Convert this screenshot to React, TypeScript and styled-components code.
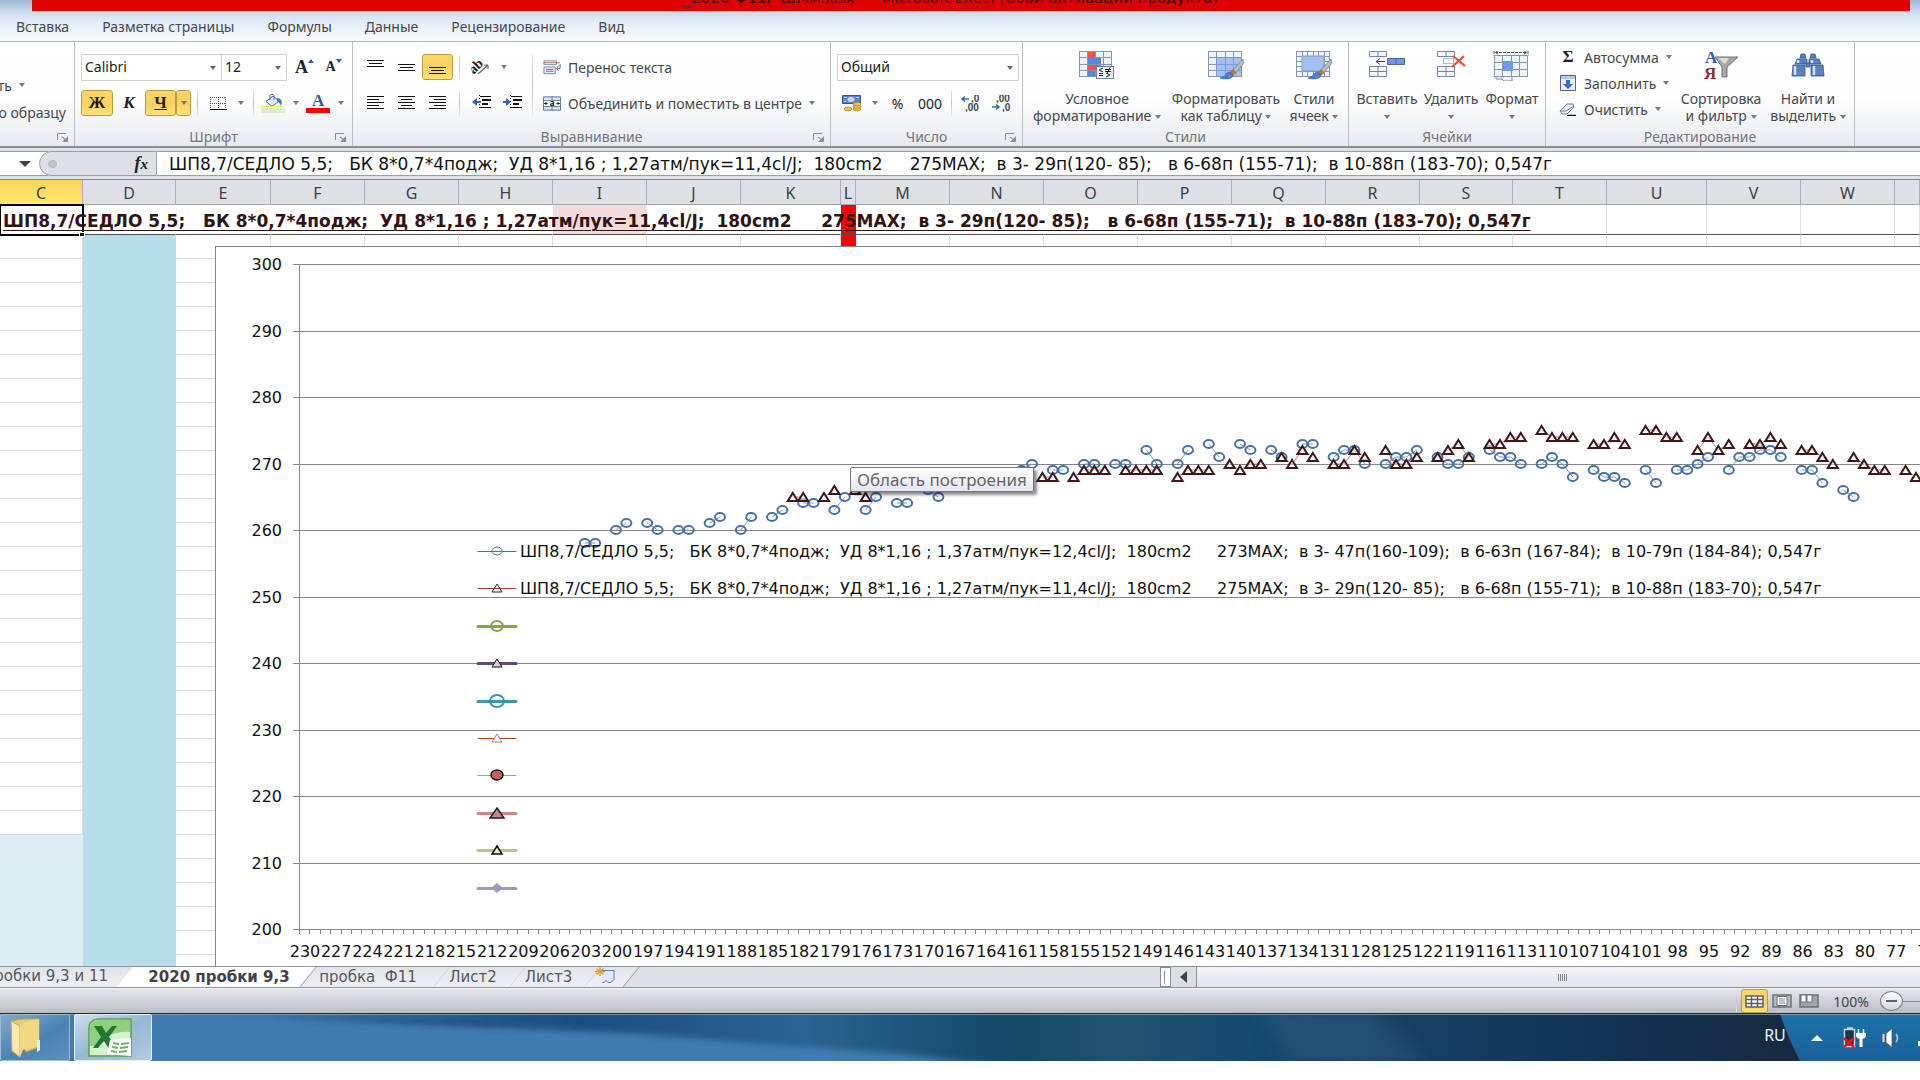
import React from "react";
import styled, { createGlobalStyle, css } from "styled-components";

const UI_FONT = `"Noto Sans", "Open Sans", sans-serif`;
const WIDE_FONT = `"DejaVu Sans", Verdana, sans-serif`;

const GlobalStyle = createGlobalStyle`
  *, *::before, *::after { box-sizing: border-box; }
  body { margin: 0; background: #fff; font-family: ${UI_FONT}; overflow: hidden; }
  button, select, input { font: inherit; color: inherit; margin: 0; }
`;

const Desktop = styled.div`
  display: flex;
  flex-direction: column;
  height: 100vh;
  padding-bottom: 19px;
  color: #45484d;
  font-size: 14px;
  overflow: hidden;
`;

/* ---------- title and ribbon tabs ---------- */

const Head = styled.header`
  flex: none;
  background: linear-gradient(#9db6d3 0, #c9daee 11px, #dfeaf7 20px, #fafcff 41px);
`;

const TitleBar = styled.div`
  display: flex;
  align-items: flex-end;
  justify-content: center;
  height: 11px;
  margin: 0 10px 0 32px;
  padding: 0 40px 6px 0;
  background: #de0000;
  color: #3a0000;
  font-family: ${WIDE_FONT};
  font-size: 15px;
  line-height: 14px;
  overflow: hidden;
  white-space: pre;
`;

const RibbonTabs = styled.nav`
  display: flex;
  align-items: center;
  gap: 33px;
  height: 30px;
  padding: 2px 0 0 16px;
`;

const RibbonTab = styled.button`
  padding: 0;
  border: 0;
  background: none;
  line-height: 20px;
`;

/* ---------- ribbon ---------- */

const Ribbon = styled.div`
  display: flex;
  flex: none;
  height: 107px;
  border-top: 1px solid #b1b6be;
  border-bottom: 2px solid #8b9097;
  background: linear-gradient(#fff 0, #fdfdfe 55%, #e7eaee 100%);
`;

const Group = styled.section<{ $w: number }>`
  display: flex;
  flex-direction: column;
  flex: none;
  width: ${(p) => p.$w}px;
  border-right: 1px solid #b9bec6;
  position: relative;
  overflow: hidden;
`;

const GroupBody = styled.div<{ $left?: number; $top?: number }>`
  display: flex;
  height: 83px;
  padding: ${(p) => p.$top ?? 12}px 0 0 ${(p) => p.$left ?? 6}px;
`;

const GroupLabel = styled.div`
  height: 22px;
  line-height: 25px;
  text-align: center;
  color: #73757f;
`;

const Launcher = styled.button`
  position: absolute;
  right: 5px;
  bottom: 4px;
  width: 12px;
  height: 9px;
  padding: 0;
  border: 0;
  background: none;
  display: flex;
`;

const Rows = styled.div<{ $gap?: number }>`
  display: flex;
  flex-direction: column;
  gap: ${(p) => p.$gap ?? 10}px;
`;

const Row = styled.div`
  display: flex;
  align-items: center;
  height: 26px;
`;

const active = css`
  border-color: #c29a3d;
  background: linear-gradient(#fbd667, #fbd063 50%, #ffe278);
`;

const IconButton = styled.button<{ $on?: boolean; $w?: number }>`
  display: flex;
  align-items: center;
  justify-content: center;
  width: ${(p) => p.$w ?? 31}px;
  height: 26px;
  padding: 0;
  border: 1px solid transparent;
  border-radius: 3px;
  background: none;
  color: #222;
  ${(p) => p.$on && active}
`;

const Bar = styled.span<{ $w?: number; $h?: number }>`
  width: ${(p) => p.$w ?? 13}px;
  height: ${(p) => p.$h ?? 26}px;
  background: linear-gradient(#e8eaed, #bfc4ca, #e8eaed) center / 1px 100% no-repeat;
`;

const Combo = styled.label<{ $w: number }>`
  display: flex;
  align-items: center;
  position: relative;
  width: ${(p) => p.$w}px;
  height: 27px;
  margin-right: -1px;
  border: 1px solid #cdd1d6;
  background: #fff;
`;

const ComboSelect = styled.select`
  flex: 1;
  min-width: 0;
  height: 100%;
  padding: 0 16px 0 3px;
  border: 0;
  appearance: none;
  background: none;
  color: #1c1c1c;
  line-height: 18px;
`;

const ComboArrow = styled.span`
  position: absolute;
  right: 5px;
  top: 11px;
  border: 3px solid transparent;
  border-top: 4px solid #6a6d72;
  border-bottom: 0;
  pointer-events: none;
`;

const Arrow = styled.span`
  display: inline-block;
  flex: none;
  border: 3px solid transparent;
  border-top: 4px solid #77797d;
  border-bottom: 0;
  vertical-align: middle;
`;

const TextButton = styled.button`
  display: flex;
  align-items: center;
  gap: 7px;
  height: 26px;
  padding: 0 0 0 7px;
  border: 0;
  background: none;
  white-space: nowrap;
`;

const IconSlot = styled.span`
  display: flex;
  justify-content: center;
  width: 18px;
`;

const ClipRow = styled(Row)<{ $right: number }>`
  justify-content: flex-end;
  width: 68px;
  padding-right: ${(p) => p.$right}px;
`;

const BigButton = styled.button<{ $w: number }>`
  display: flex;
  flex-direction: column;
  align-items: center;
  width: ${(p) => p.$w}px;
  padding: 9px 0 0;
  border: 0;
  background: none;
  line-height: 17px;
  white-space: nowrap;
`;

const BigIcon = styled.span`
  display: flex;
  height: 39px;
`;

const Glyph = styled.span<{ $size?: number; $italic?: boolean; $u?: boolean; $color?: string }>`
  font-family: "Liberation Serif", serif;
  font-weight: 700;
  font-size: ${(p) => p.$size ?? 17}px;
  line-height: 20px;
  color: ${(p) => p.$color ?? "#222"};
  font-style: ${(p) => (p.$italic ? "italic" : "normal")};
  text-decoration: ${(p) => (p.$u ? "underline" : "none")};
`;

/* ---------- formula bar ---------- */

const FormulaBar = styled.div`
  display: flex;
  flex: none;
  height: 32px;
  padding: 3px 0 3px;
  background: #dfe3e9;
  border-bottom: 1px solid #84888e;
`;

const NameBox = styled.div`
  display: flex;
  align-items: center;
  justify-content: flex-end;
  width: 48px;
  padding-right: 17px;
  background: #fff;
  border-top: 1px solid #9a9fa6;
  border-bottom: 1px solid #9a9fa6;
`;

const NameArrow = styled.span`
  border: 6px solid transparent;
  border-top: 6px solid #3f4348;
  border-bottom: 0;
`;

const FxBox = styled.div`
  display: flex;
  align-items: center;
  justify-content: space-between;
  width: 118px;
  margin-left: -9px;
  padding: 0 8px;
  border: 1px solid #9a9fa6;
  border-radius: 13px 0 0 13px;
  background: #dde1e6;
`;

const FxDot = styled.span`
  width: 9px;
  height: 8px;
  border-radius: 50%;
  background: radial-gradient(#c9ccd1, #b0b4ba);
`;

const FormulaInput = styled.input`
  flex: 1;
  min-width: 0;
  padding: 1px 12px 0;
  border: 1px solid #9a9fa6;
  border-width: 1px 0;
  background: #fff;
  color: #111;
  font-family: ${WIDE_FONT};
  font-size: 17px;
  line-height: 22px;
`;

/* ---------- worksheet ---------- */

const Sheet = styled.main`
  position: relative;
  flex: 1;
  min-height: 0;
  overflow: hidden;
`;

const Grid = styled.table`
  width: 100%;
  table-layout: fixed;
  border-collapse: separate;
  border-spacing: 0;
`;

const ColHead = styled.th<{ $on?: boolean }>`
  height: 25px;
  padding: 1px 0 0;
  border-right: 1px solid #abb0b7;
  border-bottom: 1px solid #a2a7ae;
  background: ${(p) => (p.$on ? "linear-gradient(#fdd25c, #ffe96b)" : "#dde1e5")};
  color: #3c3f44;
  font-size: 16px;
  font-weight: 400;
  line-height: 22px;
`;

const Cell = styled.td<{ $fill?: string; $bare?: boolean }>`
  height: 24px;
  padding: 0;
  border-right: 1px solid ${(p) => p.$fill ?? (p.$bare ? "transparent" : "#dcdde0")};
  border-bottom: 1px solid ${(p) => p.$fill ?? "#d8dadd"};
  background: ${(p) => p.$fill ?? "#fff"};
`;

const TitleCell = styled(Cell)`
  height: 30px;
  border-bottom: 1px solid #4e4e50;
`;

const ActiveCell = styled(TitleCell)`
  position: relative;
  padding-top: 3px;
  outline: 2px solid #000;
  outline-offset: -1px;
`;

const FillHandle = styled.span`
  position: absolute;
  right: -3px;
  bottom: -3px;
  width: 6px;
  height: 5px;
  border: 1px solid #fff;
  background: #000;
`;

const CellText = styled.span`
  position: relative;
  z-index: 1;
  padding-left: 3px;
  color: #331212;
  font-family: ${WIDE_FONT};
  font-size: 17px;
  font-weight: 700;
  line-height: 24px;
  white-space: pre;
  text-decoration: underline 1px;
  text-underline-offset: 3px;
`;

const ChartFrame = styled.figure`
  position: absolute;
  left: 215px;
  right: 0;
  top: 66px;
  height: 740px;
  margin: 0;
  border: 1px solid #868686;
  border-right: 0;
  background: #fff;
`;

const Tooltip = styled.div`
  position: absolute;
  left: 850px;
  top: 287px;
  padding: 0 6px;
  border: 1px solid #767676;
  border-radius: 2px;
  background: linear-gradient(#fff, #e4e5f0);
  box-shadow: 3px 3px 3px rgba(0, 0, 0, 0.45);
  color: #666;
  font-size: 17px;
  line-height: 23px;
  white-space: nowrap;
`;

/* ---------- sheet tabs, status bar ---------- */

const TabStrip = styled.div`
  display: flex;
  flex: none;
  height: 22px;
  border-top: 1px solid #8e9299;
  border-bottom: 1px solid #8b929b;
  background: #dce0e9;
  font-family: ${WIDE_FONT};
  font-size: 15px;
  overflow: hidden;
`;

const SheetTab = styled.button<{ $w: number; $on?: boolean }>`
  position: relative;
  z-index: ${(p) => (p.$on ? 1 : 0)};
  width: ${(p) => p.$w}px;
  padding: 0 ${(p) => (p.$on ? 4 : 14)}px 0 0;
  border: 0;
  background: none;
  color: ${(p) => (p.$on ? "#3f4348" : "#54585e")};
  font-weight: ${(p) => (p.$on ? 700 : 400)};
  line-height: 19px;
  white-space: pre;
  text-align: center;

  &::before {
    content: "";
    position: absolute;
    z-index: -1;
    inset: -1px -1px 0 ${(p) => (p.$on ? "-9px" : "0")};
    border-right: 1px solid #9196a0;
    background: ${(p) => (p.$on ? "#fff" : "linear-gradient(#e0e4ea, #eef0f4)")};
    transform: skewX(-39deg);
  }
`;

const FirstTab = styled.button`
  width: 134px;
  padding: 0 25px 0 0;
  border: 0;
  border-right: 1px solid #9196a0;
  background: linear-gradient(#dfe3e9, #eef0f4);
  color: #54585e;
  line-height: 19px;
  display: flex;
  justify-content: flex-end;
  white-space: pre;
`;

const StripFill = styled.span`
  flex: 1;
`;

const HScroll = styled.div`
  display: flex;
  width: 39.6%;
  background: #dadee5;
`;

const Splitter = styled.span`
  width: 11px;
  border: 1px solid #8a8f97;
  background: linear-gradient(#8a8f97, #8a8f97) 3px 50% / 1px 70% no-repeat #fff;
`;

const ScrollArrow = styled.button`
  width: 25px;
  padding: 0;
  border: 0;
  background: none;
  display: flex;
  align-items: center;
  justify-content: center;
`;

const Thumb = styled.div`
  flex: 1;
  display: flex;
  align-items: center;
  justify-content: center;
  padding-left: 8px;
  border-left: 1px solid #8b9097;
  background: linear-gradient(#f1f3f6, #e2e5ea);
`;

const Grip = styled.span`
  width: 9px;
  height: 7px;
  background: repeating-linear-gradient(90deg, #7d838c 0 1px, transparent 1px 2px);
`;

const StatusBar = styled.footer`
  display: flex;
  align-items: center;
  justify-content: flex-end;
  flex: none;
  height: 26px;
  border-top: 1px solid #f4f5f6;
  border-bottom: 1px solid #23292f;
  background: linear-gradient(#e3e5e9, #cfd2d6 50%, #babdc2);
`;

const ViewButton = styled(IconButton)`
  height: 24px;
`;

const ZoomValue = styled.span`
  width: 58px;
  text-align: center;
  color: #45454a;
`;

const ZoomOut = styled.button`
  display: flex;
  align-items: center;
  justify-content: center;
  width: 23px;
  height: 20px;
  padding: 0;
  border: 1px solid #7c8188;
  border-radius: 50%;
  background: linear-gradient(#fff, #d3d6da);
`;

const Minus = styled.span`
  width: 11px;
  height: 2px;
  background: #5f6368;
`;

const ZoomTrack = styled.span`
  width: 17px;
  height: 1px;
  background: #85898f;
`;

/* ---------- taskbar ---------- */

const Taskbar = styled.div`
  position: relative;
  display: flex;
  flex: none;
  height: 47px;
  overflow: hidden;
`;

const Wallpaper = styled.svg`
  position: absolute;
  inset: 0;
  width: 100%;
  height: 100%;
`;

const TaskButton = styled.button<{ $w: number; $on?: boolean }>`
  position: relative;
  display: flex;
  align-items: center;
  justify-content: center;
  width: ${(p) => p.$w}px;
  margin-right: 4px;
  padding: 0 ${(p) => (p.$on ? 4 : 20)}px 0 0;
  border: 1px solid ${(p) => (p.$on ? "#e6eef4" : "#9fbdd2")};
  border-radius: 2px;
  background: ${(p) =>
    p.$on
      ? "linear-gradient(150deg, rgba(255,255,255,.75), rgba(255,255,255,.45) 50%, rgba(255,255,255,.6))"
      : "linear-gradient(150deg, rgba(255,255,255,.35), rgba(255,255,255,.05) 55%, rgba(255,255,255,.15))"};
`;

const Tray = styled.div`
  position: relative;
  display: flex;
  align-items: center;
  margin-left: auto;
  color: #f3f6f8;
  font-size: 16px;
`;

const TrayItem = styled.button<{ $w: number }>`
  display: flex;
  align-items: center;
  justify-content: center;
  width: ${(p) => p.$w}px;
  height: 44px;
  padding: 0;
  border: 0;
  background: none;
`;

const Language = styled(TrayItem)`
  padding-bottom: 5px;
`;

/* ---------- icons ---------- */

const Lines = ({ rows, y = 0, h = 18 }: { rows: [number, number][]; y?: number; h?: number }) => (
  <svg width="18" height={h} viewBox={`0 0 18 ${h}`} shapeRendering="crispEdges">
    {rows.map(([x, w], i) => (
      <rect key={i} x={x} y={y + i * 3} width={w} height="1" fill="#111" />
    ))}
  </svg>
);

const V_ROWS: [number, number][] = [[0, 17], [2, 13], [0, 17]];
const LEFT: [number, number][] = [[0, 17], [0, 12], [0, 17], [0, 12], [0, 17]];
const CENTER: [number, number][] = [[0, 17], [3, 11], [0, 17], [3, 11], [0, 17]];
const RIGHT: [number, number][] = [[0, 17], [5, 12], [0, 17], [5, 12], [0, 17]];

const Indent = ({ back }: { back?: boolean }) => (
  <svg width="20" height="16" viewBox="0 0 20 16">
    <g fill="#111" shapeRendering="crispEdges">
      <rect x="8" y="1" width="11" height="1" />
      <rect x="10" y="4" width="9" height="2" />
      <rect x="10" y="8" width="6" height="2" />
      <rect x="8" y="12" width="11" height="1" />
      <path d="M7.500 0v15" stroke="#111" strokeDasharray="1 2" fill="none" />
    </g>
    <path d={back ? "M0 7l5-4v3h4v2H5v3z" : "M8 7L3 3v3H0v2h3v3z"} fill="#3465b5" />
  </svg>
);

const Orient = () => (
  <svg width="20" height="18" viewBox="0 0 20 18">
    <g transform="rotate(-45 9 9)">
      <text x="-1" y="10" fontSize="14" fontWeight="700" fontFamily="Liberation Serif, serif" fill="#222">
        ab
      </text>
    </g>
    <path d="M7 16L17 7M17 7h-4M17 7v4" stroke="#666" strokeWidth="1.200" fill="none" />
  </svg>
);

const WrapIcon = () => (
  <svg width="19" height="16" viewBox="0 0 19 16">
    <path d="M1 1.500h13v4H1z" fill="#fff" stroke="#6f88a8" />
    <path d="M1 8h12v7H1z" fill="#e4ecf7" stroke="#6f88a8" />
    <path d="M1 3.500h17" stroke="#a0622f" />
    <path d="M3 10.500h8M3 12.500h8" stroke="#a0622f" />
    <path d="M18 5v4.500h-3m1.500-2.500L14 9.500 16.500 12" stroke="#3c5f91" fill="none" />
  </svg>
);

const MergeIcon = () => (
  <svg width="19" height="15" viewBox="0 0 19 15">
    <path d="M.5.500h18v14H.5z" fill="#d8e4f4" stroke="#57749c" />
    <path d="M0 4.500h19M0 10.500h19M9.500 0v4M9.500 11v4" stroke="#57749c" />
    <path d="M1 5h17v5H1z" fill="#fff" />
    <path d="M1 7.500h4m-2-1.500v3M18 7.500h-4m2-1.500v3" stroke="#222" />
    <text x="7" y="10" fontSize="10" fontWeight="700" fontFamily="Liberation Serif, serif" fill="#111">
      a
    </text>
  </svg>
);

const BordersIcon = () => (
  <svg width="17" height="13" viewBox="0 0 17 13" shapeRendering="crispEdges">
    <path d="M0 .5h16M.5 0v12M8.500 0v12M15.500 0v12M0 6.500h16" stroke="#555" strokeDasharray="1 1" fill="none" />
    <path d="M0 12.500h17" stroke="#111" />
  </svg>
);

const BucketIcon = () => (
  <svg width="24" height="19" viewBox="0 0 24 19">
    <path d="M5 7.500L12 2l6 5-7 5.500z" fill="#dfe9f6" stroke="#4a6a97" />
    <path d="M9 6V1.500c0-1.500 4-1.500 4 0V6" fill="none" stroke="#4a6a97" />
    <path d="M16 4c4 0 6 3 4 8-1-3-3-4-4-5z" fill="#3f74c4" />
    <rect x="0" y="12" width="22" height="1" fill="#f3f04e" />
    <rect x="0" y="14" width="24" height="5" fill="#e1ead0" />
  </svg>
);

const FontColorIcon = () => (
  <svg width="24" height="19" viewBox="0 0 24 19">
    <text x="6" y="12" fontSize="17" fontWeight="700" fontFamily="Liberation Serif, serif" fill="#3a5795">
      A
    </text>
    <rect x="0" y="14" width="24" height="5" fill="#f00" />
  </svg>
);

const CurrencyIcon = () => (
  <svg width="20" height="17" viewBox="0 0 20 17">
    <path d="M.5.500h18v8H.5z" fill="#5c86cf" stroke="#2f5597" />
    <ellipse cx="9" cy="4.500" rx="3.500" ry="2.500" fill="#c7d9f3" />
    <path d="M2 2.500h3M14 2.500h3M2 6.500h2" stroke="#c7d9f3" />
    <g fill="#f4c34d" stroke="#a8751a" strokeWidth=".7">
      <ellipse cx="15" cy="14" rx="4" ry="1.800" />
      <ellipse cx="15" cy="11.500" rx="4" ry="1.800" />
      <ellipse cx="15" cy="9" rx="4" ry="1.800" />
      <ellipse cx="6" cy="14" rx="4" ry="1.800" />
    </g>
  </svg>
);

const DigitsIcon = ({ less }: { less?: boolean }) => (
  <svg width="21" height="17" viewBox="0 0 21 17">
    <g fontFamily="Liberation Sans, sans-serif" fontSize="10" fontWeight="700" fill="#444">
      <text x={less ? 4 : 10} y="7">{less ? ",00" : ",0"}</text>
      <text x={less ? 10 : 4} y="16">{less ? ",0" : ",00"}</text>
    </g>
    <path d={less ? "M0 12h6M4 9.500L7 12 4 14.500" : "M8 4H2M4 1.500L1 4l3 2.500"} stroke="#3465b5" strokeWidth="1.500" fill="none" />
  </svg>
);

const Cells = ({ w, h, cols, rows }: { w: number; h: number; cols: number; rows: number }) => (
  <g stroke="#8197b5" fill="none">
    <rect x=".5" y=".5" width={w} height={h} fill="#f1f5fb" />
    {Array.from({ length: cols - 1 }, (_, i) => {
      const x = Math.round(((i + 1) * w) / cols) + 0.5;
      return <path key={`c${i}`} d={`M${x} 0V${h}`} />;
    })}
    {Array.from({ length: rows - 1 }, (_, i) => {
      const y = Math.round(((i + 1) * h) / rows) + 0.5;
      return <path key={`r${i}`} d={`M0 ${y}H${w}`} />;
    })}
  </g>
);

const CondIcon = () => (
  <svg width="36" height="29" viewBox="0 0 36 29">
    <Cells w={32} h={25} cols={4} rows={4} />
    <path d="M9 1h7v6H9zM9 14h13v5H9z" fill="#f0563e" />
    <path d="M9 7h13v6H9zM9 20h7v5H9z" fill="#5b86e0" />
    <rect x="17.500" y="15.500" width="17" height="12" fill="#eef2f8" stroke="#6d83a3" />
    <path d="M24 17l-4 2 4 2m-4 1.500h4m-4 2h4M26 18.500h6M26 20.500h6m-1-4l-3 6M27 22l4 2-4 2" stroke="#222" fill="none" />
  </svg>
);

const Brush = () => (
  <g>
    <path d="M35 8L24 20l3 3L36 12z" fill="#b9bdc3" stroke="#73787f" strokeWidth=".7" />
    <path d="M25 18l-4 4 3 3 5-3z" fill="#b07a3c" />
    <path d="M22 21c-5 0-4 5-10 6 5 2 13 1 13-3z" fill="#4d7fd6" stroke="#335da8" strokeWidth=".6" />
  </g>
);

const TableIcon = () => (
  <svg width="37" height="29" viewBox="0 0 37 29">
    <Cells w={33} h={25} cols={4} rows={4} />
    <path d="M9 7h24v18H9z" fill="#a5bff3" />
    <path d="M9 13.500h24M9 19.500h24M17.500 7v18M25.500 7v18" stroke="#7e9bd6" />
    <Brush />
  </svg>
);

const StylesIcon = () => (
  <svg width="37" height="29" viewBox="0 0 37 29">
    <Cells w={33} h={25} cols={6} rows={5} />
    <path d="M6 5h22v15H6z" fill="#a5bff3" stroke="#7e9bd6" />
    <Brush />
  </svg>
);

const PartCells = () => (
  <g fill="#f4f7fb" stroke="#6f86a6">
    <path d="M.5.500h17v5H.5zM.5 15.500h17v10H.5zM9 .5v5M9 15.500v10M.5 20.500h17" />
  </g>
);

const InsertIcon = () => (
  <svg width="37" height="28" viewBox="0 0 37 28">
    <PartCells />
    <path d="M18.500 7.500h17v6h-17zM27 7.500v6" fill="#7399e6" stroke="#4867a8" />
    <path d="M16 10.500H8m3-3l-4 3 4 3" stroke="#33445f" fill="none" />
  </svg>
);

const DeleteIcon = () => (
  <svg width="29" height="28" viewBox="0 0 29 28">
    <PartCells />
    <path d="M6.500 7.500h10v5h-10z" fill="none" stroke="#4f79cc" strokeDasharray="1 1" />
    <path d="M16 5l12 10M27 5L15 16" stroke="#f0452e" strokeWidth="2.200" fill="none" />
  </svg>
);

const FormatIcon = () => (
  <svg width="38" height="30" viewBox="0 0 38 30">
    <path d="M1 0v5M35 0v5M2 1.500h32M5 0L2 1.500 5 3M31 0l3 1.500L31 3" stroke="#44566f" fill="none" strokeDasharray="3 1" />
    <g transform="translate(1 4)">
      <Cells w={33} h={21} cols={4} rows={3} />
      <path d="M9 6h10v10H9z" fill="#6f99ea" />
      <path d="M2 22v2h6l2 2h8v-4" fill="#f1f5fb" stroke="#6f86a6" />
    </g>
  </svg>
);

const FillIcon = () => (
  <svg width="16" height="16" viewBox="0 0 16 16">
    <path d="M.5.500h15v15H.5z" fill="#e8effa" stroke="#45618d" />
    <path d="M1 1h14v3H1z" fill="#b5cbee" />
    <path d="M6 5h4v4h3l-5 5-5-5h3z" fill="#2f6ae0" />
  </svg>
);

const EraserIcon = () => (
  <svg width="18" height="13" viewBox="0 0 18 13">
    <path d="M1 8l7-7h6l1 3-7 7H3z" fill="#e9eef6" stroke="#6d7f99" />
    <path d="M1 8h6l8-5" fill="none" stroke="#6d7f99" />
    <path d="M8 12.500h9" stroke="#111" strokeWidth="1.500" />
  </svg>
);

const SortIcon = () => (
  <svg width="36" height="30" viewBox="0 0 36 30">
    <path d="M12 6h23L24 16v10h-5V16z" fill="#a5a8ac" stroke="#6d7074" />
    <path d="M15 7h11l-4 6z" fill="#d9dbdd" />
    <g fontFamily="Liberation Serif, serif" fontWeight="700" fontSize="17">
      <text x="2" y="12" fill="#2f5bab">А</text>
      <text x="1" y="28" fill="#8c2f35">Я</text>
    </g>
  </svg>
);

const FindIcon = () => (
  <svg width="34" height="28" viewBox="0 0 34 28">
    <g fill="#5b7fc0" stroke="#34538c" strokeWidth=".8">
      <path d="M10 3h4l1 4H9zM20 3h4l1 4h-6z" />
      <path d="M6 8h10v5H4zM18 8h10l2 5H18z" />
      <path d="M15 12h4v4h-4z" />
      <path d="M2 14h12v11H1zM20 14h12l1 11H20z" />
    </g>
    <path d="M4 15v9M7 9v3M23 15v9M21 9v3" stroke="#d3e1f8" strokeWidth="2.500" />
  </svg>
);

const LauncherIcon = () => (
  <svg width="12" height="9" viewBox="0 0 12 9">
    <path d="M.5 7V.5H9" fill="none" stroke="#8a8f97" />
    <path d="M5 4l4 3" stroke="#6c7178" />
    <path d="M11 3v6H5z" fill="#8a8f97" />
  </svg>
);

const NewSheetIcon = () => (
  <svg width="22" height="17" viewBox="0 0 22 17">
    <path d="M6 3.500h14v9l-3 3h-3l-2-2-2 2H8" fill="#dde7f7" stroke="#5d7cb0" />
    <path d="M6 0v9M1 4.500h10M2.500 1.500l7 6M9.500 1.500l-7 6" stroke="#ec9a2c" strokeWidth="1.300" />
  </svg>
);

const FolderIcon = () => (
  <svg width="34" height="42" viewBox="0 0 34 42">
    <path d="M3 4l13-2h15v28l-13 5z" fill="#e9cc72" stroke="#c8a443" />
    <path d="M3 4l9 5v31l-8-6z" fill="#fae9a8" stroke="#cdaa4b" />
    <path d="M12 9c4-4 8-5 19-7v27l-16 4-3 7z" fill="#f1d883" />
    <path d="M29 23h3v10l-3 2z" fill="#dcecf8" />
  </svg>
);

const ExcelIcon = () => (
  <svg width="46" height="40" viewBox="0 0 46 40">
    <path d="M10 1h33v37H1V10q0-8 9-9z" fill="#d6efcf" stroke="#5aa04c" strokeWidth="1.500" />
    <path d="M10 2h32v12q-20-2-34 14H2V10q0-7 8-8z" fill="#8fcf7f" />
    <path d="M6 8h8l4 7 6-7h5l-8 11 8 12h-8l-5-8-6 7H5l8-11z" fill="#1f7a30" />
    <path d="M22 22l21-2v18l-24-2z" fill="#fff" />
    <path d="M25 25l6 1M33 26l8-1M24 29l6 1M32 30l8-1M23 33l6 1M31 34l8-1" stroke="#6db35e" strokeWidth="2" />
  </svg>
);

const BatteryIcon = () => (
  <svg width="24" height="21" viewBox="0 0 24 21">
    <path d="M4 1h6M1.500 2.500h10v17h-10z" fill="#1d3448" stroke="#c9d3da" strokeWidth="1.500" />
    <path d="M15.500 2v4M20.500 2v4" stroke="#fff" strokeWidth="1.500" />
    <path d="M13 6h10v3q-1 3-5 3t-5-3z" fill="#fff" />
    <path d="M18 11v9" stroke="#fff" strokeWidth="3" />
    <path d="M1 11l10 9M11 11L1 20" stroke="#f01010" strokeWidth="2.500" />
  </svg>
);

const SpeakerIcon = () => (
  <svg width="20" height="20" viewBox="0 0 20 20">
    <path d="M1 5.500h3v9H1z" fill="#cfd8df" stroke="#41586b" strokeWidth=".8" />
    <path d="M5 5.500L11 .5v19L5 14.500z" fill="#fff" stroke="#41586b" strokeWidth=".8" />
    <path d="M15 6q3 4 0 8" fill="none" stroke="#a9c4d9" strokeWidth="1.800" />
  </svg>
);

/* ---------- chart ---------- */

type Point = [number, number];

const circles: Point[] = [
  [27, 258], [28, 258], [30, 260], [31, 261], [33, 261], [34, 260], [36, 260], [37, 260], [39, 261], [40, 262],
  [42, 260], [43, 262], [45, 262], [46, 263], [48, 264], [49, 264], [51, 263], [52, 265], [54, 263], [55, 265],
  [57, 264], [58, 264], [60, 266], [61, 265], [69, 269], [70, 270], [72, 269], [73, 269], [75, 270], [76, 270],
  [78, 270], [79, 270], [81, 272], [82, 270], [84, 270], [85, 272], [87, 273], [88, 271], [90, 273], [91, 272],
  [93, 272], [94, 271], [96, 273], [97, 273], [99, 271], [100, 272], [101, 272], [102, 270], [104, 270], [105, 271],
  [106, 271], [107, 272], [109, 271], [110, 270], [111, 270], [112, 271], [114, 272], [115, 271], [116, 271],
  [117, 270], [119, 270], [120, 271], [121, 270], [122, 268], [124, 269], [125, 268], [126, 268], [127, 267],
  [129, 269], [130, 267], [132, 269], [133, 269], [134, 270], [135, 271], [137, 269], [138, 271], [139, 271],
  [140, 272], [141, 272], [142, 271], [144, 269], [145, 269], [146, 267], [148, 266], [149, 265],
];

const triangles: Point[] = [
  [47, 265], [48, 265], [50, 265], [51, 266], [53, 266], [54, 265], [71, 268], [72, 268], [74, 268], [75, 269],
  [76, 269], [77, 269], [79, 269], [80, 269], [81, 269], [82, 269], [84, 268], [85, 269], [86, 269], [87, 269],
  [89, 270], [90, 269], [91, 270], [92, 270], [94, 271], [95, 270], [96, 272], [97, 271], [99, 270], [100, 270],
  [101, 272], [102, 271], [104, 272], [105, 270], [106, 270], [107, 271], [109, 271], [110, 272], [111, 273],
  [112, 271], [114, 273], [115, 273], [116, 274], [117, 274], [119, 275], [120, 274], [121, 274], [122, 274],
  [124, 273], [125, 273], [126, 274], [127, 273], [129, 275], [130, 275], [131, 274], [132, 274], [134, 272],
  [135, 274], [136, 272], [137, 273], [139, 273], [140, 273], [141, 274], [142, 273], [144, 272], [145, 272],
  [146, 271], [147, 270], [149, 271], [150, 270], [151, 269], [152, 269], [154, 269], [155, 268],
];

const STEP = 10.4;
const px = (i: number) => 88 + i * STEP;
const py = (v: number) => Math.round(17 + (300 - v) * 6.65);

const linePath = (pts: Point[]) =>
  pts
    .map(([i, v], n) => {
      const joined = n > 0 && pts[n - 1][0] === i - 1;
      return `${joined ? "L" : "M"}${px(i)} ${py(v)}`;
    })
    .join("");

const tri = (x: number, y: number, w: number, h: number) => `M${x} ${y - h}L${x + w} ${y + h}H${x - w}Z`;

const LEGEND_1 =
  "ШП8,7/СЕДЛО 5,5;   БК 8*0,7*4подж;  УД 8*1,16 ; 1,37атм/пук=12,4cl/J;  180cm2     273MAX;  в 3- 47п(160-109);  в 6-63п (167-84);  в 10-79п (184-84); 0,547г";
const FORMULA =
  "ШП8,7/СЕДЛО 5,5;   БК 8*0,7*4подж;  УД 8*1,16 ; 1,27атм/пук=11,4cl/J;  180cm2     275MAX;  в 3- 29п(120- 85);   в 6-68п (155-71);  в 10-88п (183-70); 0,547г";

type LegendEntry = { line: string; lw: number; mark: React.ReactNode; text?: string };

const legend: LegendEntry[] = [
  { line: "#4573a7", lw: 1, mark: <ellipse rx="5" ry="4" fill="none" stroke="#4573a7" />, text: LEGEND_1 },
  { line: "#a8423f", lw: 1, mark: <path d={tri(0, 0, 5, 4)} fill="none" stroke="#3a1414" />, text: FORMULA },
  { line: "#87a44b", lw: 3, mark: <ellipse rx="6" ry="5" fill="none" stroke="#87a44b" strokeWidth="2" /> },
  { line: "#5f4a7d", lw: 3, mark: <path d={tri(0, 0, 5, 4)} fill="#d5cfdf" stroke="#111" /> },
  { line: "#3d96ae", lw: 3, mark: <ellipse rx="7" ry="6" fill="none" stroke="#3d96ae" strokeWidth="2" /> },
  { line: "#a04a14", lw: 1, mark: <path d={tri(0, 0, 5, 4)} fill="#fff" stroke="#d96b66" /> },
  { line: "#8aa3cb", lw: 1, mark: <ellipse rx="6" ry="5" fill="#c9625d" stroke="#111" strokeWidth="1.500" /> },
  { line: "#cd8683", lw: 3, mark: <path d={tri(0, 0, 7, 5)} fill="#c98682" stroke="#222" strokeWidth="1.500" /> },
  { line: "#b1c68b", lw: 3, mark: <path d={tri(0, 0, 5, 4)} fill="#e3ecd4" stroke="#111" strokeWidth="1.500" /> },
  { line: "#a596bd", lw: 3, mark: <path d="M0-5L6 0 0 5-6 0z" fill="#a596bd" /> },
];

const ChartSvg = styled.svg`
  display: block;
  width: 100%;
  height: 100%;
  fill: #111;
  font-family: ${WIDE_FONT};
  font-size: 16px;
`;

const LegendText = styled.text`
  white-space: pre;
`;

const Chart = () => (
  <ChartSvg role="img" aria-label="Диаграмма">
    <g stroke="#868686" shapeRendering="crispEdges">
      {Array.from({ length: 11 }, (_, i) => (
        <line key={i} x1="77" x2="100%" y1={py(300 - i * 10) + 0.5} y2={py(300 - i * 10) + 0.5} />
      ))}
      <line x1="83.500" x2="83.500" y1="17" y2="683" />
      {Array.from({ length: 170 }, (_, i) => {
        const x = Math.round(83 + i * STEP) + 0.5;
        return <line key={i} x1={x} x2={x} y1="682" y2="687" />;
      })}
    </g>
    {Array.from({ length: 11 }, (_, i) => (
      <text key={i} x="66" y={py(300 - i * 10) + 6} textAnchor="end">
        {300 - i * 10}
      </text>
    ))}
    {Array.from({ length: 56 }, (_, i) => (
      <text key={i} x={px(i * 3) + 1} y="710" textAnchor="middle">
        {230 - i * 3}
      </text>
    ))}
    <path d={linePath(circles)} fill="none" stroke="#7d9cc4" />
    <g fill="none" stroke="#4371a8" strokeWidth="2">
      {circles.map(([i, v]) => (
        <ellipse key={i} cx={px(i)} cy={py(v)} rx="5" ry="4" />
      ))}
    </g>
    <path d={linePath(triangles)} fill="none" stroke="#c98280" />
    <g fill="#ffffff88" stroke="#3f1718" strokeWidth="2">
      {triangles.map(([i, v]) => (
        <path key={i} d={tri(px(i), py(v), 5, 4)} />
      ))}
    </g>
    {legend.map((e, i) => {
      const y = Math.round(304 + i * 37.4);
      return (
        <g key={i}>
          <line x1="262" x2="300" y1={y + 0.5} y2={y + 0.5} stroke={e.line} strokeWidth={e.lw} strokeLinecap="round" />
          <g transform={`translate(281 ${y})`}>{e.mark}</g>
          {e.text && (
            <LegendText x="304" y={y + 6}>
              {e.text}
            </LegendText>
          )}
        </g>
      );
    })}
  </ChartSvg>
);

/* ---------- worksheet data ---------- */

const columns: { name: string; w?: number }[] = [
  { name: "C", w: 83 }, { name: "D", w: 93 }, { name: "E", w: 95 }, { name: "F", w: 94 }, { name: "G", w: 94 },
  { name: "H", w: 94 }, { name: "I", w: 94 }, { name: "J", w: 94 }, { name: "K", w: 100 }, { name: "L", w: 15 },
  { name: "M", w: 94 }, { name: "N", w: 94 }, { name: "O", w: 94 }, { name: "P", w: 94 }, { name: "Q", w: 94 },
  { name: "R", w: 94 }, { name: "S", w: 93 }, { name: "T", w: 94 }, { name: "U", w: 100 }, { name: "V", w: 94 },
  { name: "W", w: 94 }, { name: "" },
];

const titleFill: Record<string, string> = { I: "#f2dcdb", L: "#ff0000" };

const fillFor = (name: string, row: number) => {
  if (name === "D") return "#b7dde8";
  if (name === "C" && row >= 25) return "#daeef3";
  if (name === "L" && row === 0) return "#ff0000";
  return undefined;
};

const Worksheet = () => (
  <Sheet>
    <Grid>
      <colgroup>
        {columns.map((c, i) => (
          <col key={i} width={c.w} />
        ))}
      </colgroup>
      <thead>
        <tr>
          {columns.map((c, i) => (
            <ColHead key={i} $on={c.name === "C"}>
              {c.name}
            </ColHead>
          ))}
        </tr>
      </thead>
      <tbody>
        <tr>
          {columns.map((c, i) =>
            i === 0 ? (
              <ActiveCell key={i} $bare>
                <CellText>{FORMULA}</CellText>
                <FillHandle />
              </ActiveCell>
            ) : (
              <TitleCell key={i} $fill={titleFill[c.name]} $bare={i < 17} />
            )
          )}
        </tr>
        {Array.from({ length: 31 }, (_, r) => (
          <tr key={r}>
            {columns.map((c, i) => (
              <Cell key={i} $fill={fillFor(c.name, r)} />
            ))}
          </tr>
        ))}
      </tbody>
    </Grid>
    <ChartFrame>
      <Chart />
    </ChartFrame>
    <Tooltip role="tooltip">Область построения</Tooltip>
  </Sheet>
);

/* ---------- ribbon parts ---------- */

const ComboBox = ({ name, value, w }: { name: string; value: string; w: number }) => (
  <Combo $w={w}>
    <ComboSelect aria-label={name} defaultValue={value}>
      <option>{value}</option>
    </ComboSelect>
    <ComboArrow />
  </Combo>
);

const Split = ({ name, children }: { name: string; children: React.ReactNode }) => (
  <>
    <IconButton $w={30} aria-label={name}>
      {children}
    </IconButton>
    <IconButton $w={15} aria-label={`${name}: параметры`}>
      <Arrow />
    </IconButton>
  </>
);

const Big = ({ w, icon, lines }: { w: number; icon: React.ReactNode; lines: string[] }) => (
  <BigButton $w={w}>
    <BigIcon>{icon}</BigIcon>
    <span>{lines[0]}</span>
    <span>
      {lines[1] && `${lines[1]} `}
      <Arrow />
    </span>
  </BigButton>
);

const GroupFoot = ({ title, launcher = true }: { title: string; launcher?: boolean }) => (
  <>
    <GroupLabel>{title}</GroupLabel>
    {launcher && (
      <Launcher aria-label="Параметры группы">
        <LauncherIcon />
      </Launcher>
    )}
  </>
);

const EditBig = styled.div`
  position: absolute;
  top: 0;
  right: 5px;
  display: flex;
`;

const tabs = ["Вставка", "Разметка страницы", "Формулы", "Данные", "Рецензирование", "Вид"];

export default function App() {
  return (
    <Desktop>
      <GlobalStyle />
      <Head>
        <TitleBar>_2020 Ф11Г ШМм.xlsx  –  Microsoft Excel (Сбой активации продукта)</TitleBar>
        <RibbonTabs>
          {tabs.map((t) => (
            <RibbonTab key={t}>{t}</RibbonTab>
          ))}
        </RibbonTabs>
      </Head>

      <Ribbon>
        <Group $w={75}>
          <GroupBody $left={0} $top={30}>
            <Rows $gap={1}>
              <ClipRow $right={43}>
                <TextButton>
                  Копировать <Arrow />
                </TextButton>
              </ClipRow>
              <ClipRow $right={2}>
                <TextButton>Формат по образцу</TextButton>
              </ClipRow>
            </Rows>
          </GroupBody>
          <GroupFoot title="" />
        </Group>

        <Group $w={278}>
          <GroupBody>
            <Rows>
              <Row>
                <ComboBox name="Шрифт" value="Calibri" w={141} />
                <ComboBox name="Размер шрифта" value="12" w={66} />
                <Bar $w={4} $h={0} />
                <IconButton $w={29} aria-label="Увеличить размер шрифта">
                  <Glyph $size={18}>A</Glyph>
                  <svg width="6" height="16"><path d="M0 4l3-4 3 4z" fill="#2f5bab" /></svg>
                </IconButton>
                <IconButton $w={29} aria-label="Уменьшить размер шрифта">
                  <Glyph $size={14}>A</Glyph>
                  <svg width="6" height="16"><path d="M0 0l3 4 3-4z" fill="#2f5bab" /></svg>
                </IconButton>
              </Row>
              <Row>
                <IconButton $on $w={32} aria-label="Полужирный"><Glyph>Ж</Glyph></IconButton>
                <IconButton $w={32} aria-label="Курсив"><Glyph $italic>К</Glyph></IconButton>
                <IconButton $on $w={31} aria-label="Подчеркнутый"><Glyph $u>Ч</Glyph></IconButton>
                <IconButton $on $w={15} aria-label="Вид подчеркивания"><Arrow /></IconButton>
                <Bar $w={12} />
                <Split name="Границы"><BordersIcon /></Split>
                <Bar $w={10} />
                <Split name="Цвет заливки"><BucketIcon /></Split>
                <Split name="Цвет текста"><FontColorIcon /></Split>
              </Row>
            </Rows>
          </GroupBody>
          <GroupFoot title="Шрифт" />
        </Group>

        <Group $w={478}>
          <GroupBody $left={7}>
            <Rows>
              <Row>
                <IconButton aria-label="По верхнему краю"><Lines rows={V_ROWS} y={3} h={20} /></IconButton>
                <IconButton aria-label="По середине"><Lines rows={V_ROWS} y={6} /></IconButton>
                <IconButton $on aria-label="По нижнему краю"><Lines rows={V_ROWS} y={9} /></IconButton>
                <Bar />
                <Split name="Ориентация"><Orient /></Split>
              </Row>
              <Row>
                <IconButton aria-label="По левому краю"><Lines rows={LEFT} y={2} /></IconButton>
                <IconButton aria-label="По центру"><Lines rows={CENTER} y={2} /></IconButton>
                <IconButton aria-label="По правому краю"><Lines rows={RIGHT} y={2} /></IconButton>
                <Bar />
                <IconButton aria-label="Уменьшить отступ"><Indent back /></IconButton>
                <IconButton aria-label="Увеличить отступ"><Indent /></IconButton>
              </Row>
            </Rows>
            <Bar $w={8} $h={62} />
            <Rows>
              <TextButton><IconSlot><WrapIcon /></IconSlot>Перенос текста</TextButton>
              <TextButton><IconSlot><MergeIcon /></IconSlot>Объединить и поместить в центре <Arrow /></TextButton>
            </Rows>
          </GroupBody>
          <GroupFoot title="Выравнивание" />
        </Group>

        <Group $w={192}>
          <GroupBody>
            <Rows>
              <Row><ComboBox name="Числовой формат" value="Общий" w={182} /></Row>
              <Row>
                <Split name="Финансовый формат"><CurrencyIcon /></Split>
                <IconButton aria-label="Процентный формат">%</IconButton>
                <IconButton $w={34} aria-label="Формат с разделителями">000</IconButton>
                <Bar $w={9} />
                <IconButton aria-label="Увеличить разрядность"><DigitsIcon /></IconButton>
                <IconButton aria-label="Уменьшить разрядность"><DigitsIcon less /></IconButton>
              </Row>
            </Rows>
          </GroupBody>
          <GroupFoot title="Число" />
        </Group>

        <Group $w={326}>
          <GroupBody $left={2} $top={0}>
            <Big w={144} icon={<CondIcon />} lines={["Условное", "форматирование"]} />
            <Big w={114} icon={<TableIcon />} lines={["Форматировать", "как таблицу"]} />
            <Big w={62} icon={<StylesIcon />} lines={["Стили", "ячеек"]} />
          </GroupBody>
          <GroupFoot title="Стили" launcher={false} />
        </Group>

        <Group $w={197}>
          <GroupBody $top={0} $left={5}>
            <Big w={66} icon={<InsertIcon />} lines={["Вставить"]} />
            <Big w={62} icon={<DeleteIcon />} lines={["Удалить"]} />
            <Big w={60} icon={<FormatIcon />} lines={["Формат"]} />
          </GroupBody>
          <GroupFoot title="Ячейки" launcher={false} />
        </Group>

        <Group $w={309}>
          <GroupBody $top={2}>
            <Rows $gap={0}>
              <TextButton><IconSlot><Glyph>Σ</Glyph></IconSlot>Автосумма <Arrow /></TextButton>
              <TextButton><IconSlot><FillIcon /></IconSlot>Заполнить <Arrow /></TextButton>
              <TextButton><IconSlot><EraserIcon /></IconSlot>Очистить <Arrow /></TextButton>
            </Rows>
          </GroupBody>
          <GroupFoot title="Редактирование" launcher={false} />
          <EditBig>
            <Big w={92} icon={<SortIcon />} lines={["Сортировка", "и фильтр"]} />
            <Big w={82} icon={<FindIcon />} lines={["Найти и", "выделить"]} />
          </EditBig>
        </Group>
      </Ribbon>

      <FormulaBar>
        <NameBox><NameArrow /></NameBox>
        <FxBox>
          <FxDot />
          <Glyph $italic $size={18}>f<small>x</small></Glyph>
        </FxBox>
        <FormulaInput aria-label="Строка формул" defaultValue={FORMULA} />
      </FormulaBar>

      <Worksheet />

      <TabStrip>
        <FirstTab>пробки 9,3 и 11</FirstTab>
        <SheetTab $w={174} $on>2020 пробки 9,3</SheetTab>
        <SheetTab $w={134}>пробка  Ф11</SheetTab>
        <SheetTab $w={76}>Лист2</SheetTab>
        <SheetTab $w={75}>Лист3</SheetTab>
        <SheetTab $w={38} aria-label="Вставить лист"><NewSheetIcon /></SheetTab>
        <StripFill />
        <HScroll>
          <Splitter />
          <ScrollArrow aria-label="Прокрутка влево">
            <svg width="8" height="12"><path d="M8 0v12L1 6z" fill="#3f4348" /></svg>
          </ScrollArrow>
          <Thumb><Grip /></Thumb>
        </HScroll>
      </TabStrip>

      <StatusBar>
        <Bar $w={9} $h={22} />
        <ViewButton $on $w={27} aria-label="Обычный">
          <svg width="19" height="13" viewBox="0 0 19 13"><path d="M1 1h17v11H1zM1 4.500h17M1 8.500h17M6.500 1v11M12.500 1v11" fill="#fff" stroke="#5c5f66" strokeWidth="1.500" /></svg>
        </ViewButton>
        <ViewButton $w={27} aria-label="Разметка страницы">
          <svg width="20" height="14" viewBox="0 0 20 14"><path d="M1 1h18v12H1z" fill="#b6b9be" stroke="#6d7076" strokeWidth="1.500" /><path d="M5 2.500h10v9H5z" fill="#fff" stroke="#6d7076" /><path d="M7 5h6M7 7h6M7 9h6" stroke="#85888d" /></svg>
        </ViewButton>
        <ViewButton $w={27} aria-label="Страничный режим">
          <svg width="20" height="14" viewBox="0 0 20 14"><path d="M1 1h18v12H1z" fill="#9fa2a8" stroke="#6d7076" strokeWidth="1.500" /><path d="M2 1h5v7H2zM8 1h5v7H8z" fill="#fff" stroke="#6d7076" /></svg>
        </ViewButton>
        <ZoomValue>100%</ZoomValue>
        <ZoomOut aria-label="Уменьшить"><Minus /></ZoomOut>
        <ZoomTrack />
      </StatusBar>

      <Taskbar>
        <Wallpaper viewBox="0 0 1920 47" preserveAspectRatio="none" aria-hidden="true">
          <defs>
            <linearGradient id="sky">
              <stop offset="0" stopColor="#3a81af" />
              <stop offset=".18" stopColor="#2a6da2" />
              <stop offset=".3" stopColor="#1d4c7e" />
              <stop offset=".42" stopColor="#2b6391" />
              <stop offset=".52" stopColor="#14496a" />
              <stop offset=".58" stopColor="#205272" />
              <stop offset=".66" stopColor="#14486f" />
              <stop offset=".74" stopColor="#143f65" />
              <stop offset=".86" stopColor="#12304f" />
              <stop offset=".93" stopColor="#182a40" />
            </linearGradient>
            <linearGradient id="right" x1="0" y1="0" x2="0" y2="1">
              <stop offset="0" stopColor="#1c72a8" />
              <stop offset="1" stopColor="#1a609a" />
            </linearGradient>
            <filter id="soft" x="-5%" y="-50%" width="110%" height="200%">
              <feGaussianBlur stdDeviation="12 3" />
            </filter>
          </defs>
          <rect width="1920" height="47" fill="url(#sky)" />
          <path d="M200-4L420 5 640 20 900 40 1010 54H-40V-10z" fill="#3f7cb0" filter="url(#soft)" />
          <path d="M240 1L480 7 760 27 1000 45 880 36 620 17 420 10z" fill="#1c406d" filter="url(#soft)" />
          <path d="M1260 0l30 47h130L1380 0z" fill="#2a567a" opacity=".6" filter="url(#soft)" />
          <path d="M1780 0q8 24 20 47h120V0z" fill="url(#right)" />
          <path d="M0 .5h1920" stroke="#8fb3c6" opacity=".7" />
        </Wallpaper>
        <TaskButton $w={70} aria-label="Проводник"><FolderIcon /></TaskButton>
        <TaskButton $w={78} $on aria-label="Microsoft Excel"><ExcelIcon /></TaskButton>
        <Tray>
          <Language $w={42}>RU</Language>
          <TrayItem $w={42} aria-label="Скрытые значки">
            <svg width="12" height="6"><path d="M0 6l6-6 6 6z" fill="#eef3f7" /></svg>
          </TrayItem>
          <TrayItem $w={34} aria-label="Батарея"><BatteryIcon /></TrayItem>
          <TrayItem $w={38} aria-label="Громкость"><SpeakerIcon /></TrayItem>
          <TrayItem $w={10} aria-label="Сеть">
            <svg width="10" height="20"><path d="M8 13h2v5H8z" fill="#fff" /></svg>
          </TrayItem>
        </Tray>
      </Taskbar>
    </Desktop>
  );
}
